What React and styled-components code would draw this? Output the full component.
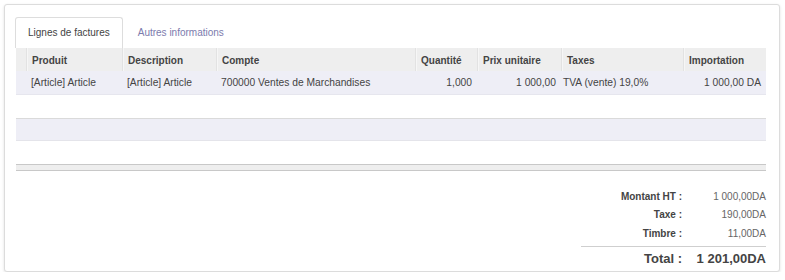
import React from "react";
import styled, { createGlobalStyle } from "styled-components";

const GlobalStyle = createGlobalStyle`
  html, body {
    margin: 0;
    padding: 0;
    background: #ffffff;
  }
  body {
    font-family: "Liberation Sans", Arial, sans-serif;
    font-size: 10px;
    color: #4c4c4c;
  }
`;

const columns = [
  { key: "handle", label: "", width: 10 },
  { key: "product", label: "Produit", width: 96 },
  { key: "description", label: "Description", width: 94 },
  { key: "account", label: "Compte", width: 199 },
  { key: "quantity", label: "Quantité", width: 62, right: true },
  { key: "price", label: "Prix unitaire", width: 84, right: true },
  { key: "taxes", label: "Taxes", width: 122, tight: true },
  { key: "amount", label: "Importation", width: 83, right: true },
];

const line = {
  handle: "",
  product: "[Article] Article",
  description: "[Article] Article",
  account: "700000 Ventes de Marchandises",
  quantity: "1,000",
  price: "1 000,00",
  taxes: "TVA (vente) 19,0%",
  amount: "1 000,00 DA",
};

const totals = [
  { label: "Montant HT :", value: "1 000,00DA" },
  { label: "Taxe :", value: "190,00DA" },
  { label: "Timbre :", value: "11,00DA" },
];

function App() {
  const template = columns.map((c) => `${c.width}px`).join(" ");

  return (
    <>
      <GlobalStyle />
      <Sheet>
        <Tabs>
          <Tab $active>Lignes de factures</Tab>
          <Tab>Autres informations</Tab>
        </Tabs>

        <Table>
          <HeaderRow $cols={template}>
            {columns.map((c) => (
              <HeadCell key={c.key} $first={c.key === "handle"}>
                {c.label}
              </HeadCell>
            ))}
          </HeaderRow>

          <Row $cols={template} $striped>
            {columns.map((c) => (
              <Cell key={c.key} $right={c.right} $tight={c.tight}>
                {line[c.key]}
              </Cell>
            ))}
          </Row>
          <EmptyRow />
          <EmptyRow $striped />
          <EmptyRow />
          <TableFoot />
        </Table>

        <TotalsWrap>
          <Totals>
            {totals.map((t) => (
              <TotalLine key={t.label}>
                <TotalLabel>{t.label}</TotalLabel>
                <TotalValue>{t.value}</TotalValue>
              </TotalLine>
            ))}
            <GrandTotal>
              <GrandLabel>Total :</GrandLabel>
              <GrandValue>1 201,00DA</GrandValue>
            </GrandTotal>
          </Totals>
        </TotalsWrap>
      </Sheet>
    </>
  );
}

const Sheet = styled.div`
  box-sizing: border-box;
  margin: 4px 0 0 4px;
  width: 776px;
  height: 268px;
  padding: 12px 13px 0 11px;
  background: #ffffff;
  border: 1px solid #dcdcdc;
  border-radius: 3px;
  box-shadow: 0 1px 3px rgba(0, 0, 0, 0.12);
`;

const Tabs = styled.div`
  display: flex;
  align-items: flex-end;
  height: 31px;
  margin-left: -1px;
`;

const Tab = styled.div`
  box-sizing: border-box;
  display: flex;
  align-items: center;
  height: 31px;
  padding: 0 12px 1px;
  margin-right: 2px;
  font-size: 10px;
  color: ${(p) => (p.$active ? "#444444" : "#7c7bad")};
  background: #ffffff;
  border: 1px solid ${(p) => (p.$active ? "#dddddd" : "transparent")};
  border-bottom: none;
  border-radius: 3px 3px 0 0;
  white-space: nowrap;
`;

const Table = styled.div`
  display: flex;
  flex-direction: column;
  width: 750px;
`;

const HeaderRow = styled.div`
  display: grid;
  grid-template-columns: ${(p) => p.$cols};
  height: 23px;
  background: #eeeeee;
`;

const HeadCell = styled.div`
  display: flex;
  align-items: center;
  padding: 1px 5px 0;
  font-weight: 700;
  color: #444444;
  white-space: nowrap;
  border-left: ${(p) => (p.$first ? "none" : "1px solid #e2e2e2")};
  box-shadow: ${(p) => (p.$first ? "none" : "inset 1px 0 0 #f6f6f6")};
`;

const Row = styled.div`
  display: grid;
  grid-template-columns: ${(p) => p.$cols};
  height: 24px;
  background: ${(p) => (p.$striped ? "#eeeef6" : "#ffffff")};
  border-bottom: 1px solid #e6e6ee;
  box-sizing: border-box;
`;

const Cell = styled.div`
  display: flex;
  align-items: center;
  justify-content: ${(p) => (p.$right ? "flex-end" : "flex-start")};
  padding: ${(p) => (p.$tight ? "0 5px 0 2px" : "0 5px")};
  font-size: 10.25px;
  color: #444444;
  white-space: nowrap;
  overflow: hidden;
`;

const EmptyRow = styled.div`
  box-sizing: border-box;
  height: 23px;
  background: ${(p) => (p.$striped ? "#eeeef6" : "#ffffff")};
  border-top: ${(p) => (p.$striped ? "1px solid #dadada" : "none")};
  border-bottom: ${(p) => (p.$striped ? "1px solid #e4e4ea" : "none")};
`;

const TableFoot = styled.div`
  box-sizing: border-box;
  height: 7px;
  background: #eeeeee;
  border-top: 1px solid #c8c8c8;
  border-bottom: 1px solid #c8c8c8;
`;

const TotalsWrap = styled.div`
  display: flex;
  justify-content: flex-end;
  width: 750px;
  margin-top: 16px;
`;

const Totals = styled.div`
  display: flex;
  flex-direction: column;
  width: 185px;
`;

const TotalLine = styled.div`
  display: grid;
  grid-template-columns: 101px 84px;
  height: 18.5px;
  align-items: center;
`;

const TotalLabel = styled.div`
  text-align: right;
  font-weight: 700;
  color: #444444;
  white-space: nowrap;
`;

const TotalValue = styled.div`
  text-align: right;
  color: #666666;
  white-space: nowrap;
`;

const GrandTotal = styled.div`
  display: grid;
  grid-template-columns: 101px 84px;
  align-items: center;
  height: 23px;
  margin-top: 3px;
  border-top: 1px solid #cfcfcf;
`;

const GrandLabel = styled.div`
  text-align: right;
  font-size: 13px;
  font-weight: 700;
  color: #444444;
  white-space: nowrap;
`;

const GrandValue = styled.div`
  text-align: right;
  font-size: 13px;
  font-weight: 700;
  color: #444444;
  white-space: nowrap;
`;

export default App;
